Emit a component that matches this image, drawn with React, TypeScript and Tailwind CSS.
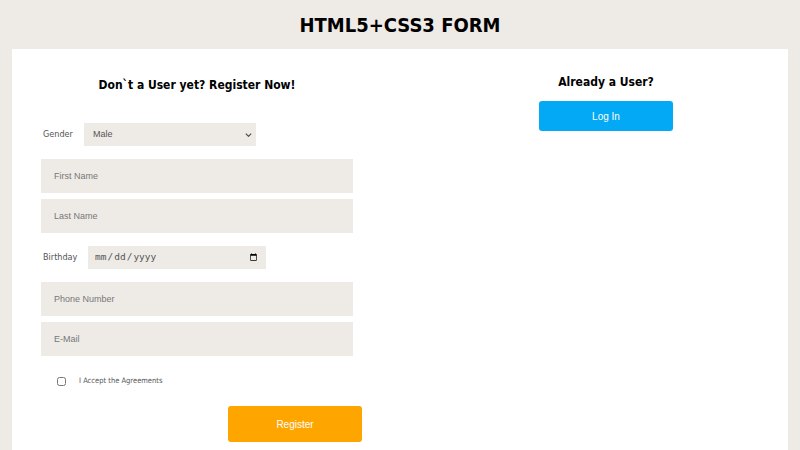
import { useState } from "react";

const field =
  "h-[34px] w-[312px] bg-[#eeebe7] px-[13px] text-[9px] text-gray-700 outline-none placeholder:text-[#777] [font-family:'Liberation_Sans',Arial,sans-serif]";

export default function App() {
  const [gender, setGender] = useState("Male");
  const [agree, setAgree] = useState(false);

  return (
    <div className="flex min-h-[450px] flex-col bg-[#eeeae6] [font-family:'DejaVu_Sans_Condensed','DejaVu_Sans',sans-serif]">
      <h1 className="pt-[12px] pb-[11px] text-center text-[20px] leading-[26px] font-bold text-black">
        HTML5+CSS3 FORM
      </h1>

      <main className="mx-[12px] flex flex-1 bg-white">
        <section className="w-[370px] shrink-0 pt-[26px]">
          <h2 className="text-center text-[12px] leading-[20px] font-bold text-black">
            Don`t a User yet? Register Now!
          </h2>

          <form className="mt-[28px] flex flex-col pl-[29px]">
            <div className="flex h-[23px] items-center">
              <label className="w-[43px] pl-[2px] text-[9px] text-[#555]">
                Gender
              </label>
              <div className="relative flex h-[23px]">
                <select
                  value={gender}
                  onChange={(e) => setGender(e.target.value)}
                  className="block h-[23px] w-[172px] appearance-none bg-[#eeebe7] pl-[9px] text-[9px] text-[#555] outline-none [font-family:'Liberation_Sans',Arial,sans-serif]"
                >
                  <option>Male</option>
                  <option>Female</option>
                </select>
                <svg
                  viewBox="0 0 10 6"
                  className="pointer-events-none absolute top-[10px] right-[4px] h-[4px] w-[7px]"
                >
                  <path d="M1 1l4 4 4-4" fill="none" stroke="#444" strokeWidth="1.6" />
                </svg>
              </div>
            </div>

            <input placeholder="First Name" className={"mt-[13px] " + field} />
            <input placeholder="Last Name" className={"mt-[6px] " + field} />

            <div className="mt-[13px] flex items-center">
              <label className="w-[47px] pl-[2px] text-[9px] text-[#555]">
                Birthday
              </label>
              <input
                type="date"
                className="h-[23px] w-[178px] bg-[#eeebe7] px-[6px] text-[9.5px] text-[#555] outline-none [font-family:'DejaVu_Sans_Mono',monospace]"
              />
            </div>

            <input placeholder="Phone Number" className={"mt-[13px] " + field} />
            <input placeholder="E-Mail" className={"mt-[6px] " + field} />

            <label className="mt-[18px] flex h-[14px] items-center pl-[16px] text-[7.5px] text-[#555]">
              <input
                type="checkbox"
                checked={agree}
                onChange={(e) => setAgree(e.target.checked)}
                className="m-0 h-[9px] w-[9px]"
              />
              <span className="ml-[13px]">I Accept the Agreements</span>
            </label>

            <button
              type="button"
              className="mt-[18px] ml-[187px] h-[36px] w-[134px] rounded-[3px] bg-[#ffa500] text-[10px] text-white [font-family:'Liberation_Sans',Arial,sans-serif]"
            >
              Register
            </button>
          </form>
        </section>

        <section className="ml-[42px] flex w-[364px] shrink-0 flex-col items-center pt-[23px]">
          <h2 className="text-[12px] leading-[20px] font-bold text-black">
            Already a User?
          </h2>
          <button
            type="button"
            className="mt-[9px] h-[30px] w-[134px] rounded-[3px] bg-[#03a9f4] text-[10px] text-white [font-family:'Liberation_Sans',Arial,sans-serif]"
          >
            Log In
          </button>
        </section>
      </main>
    </div>
  );
}
